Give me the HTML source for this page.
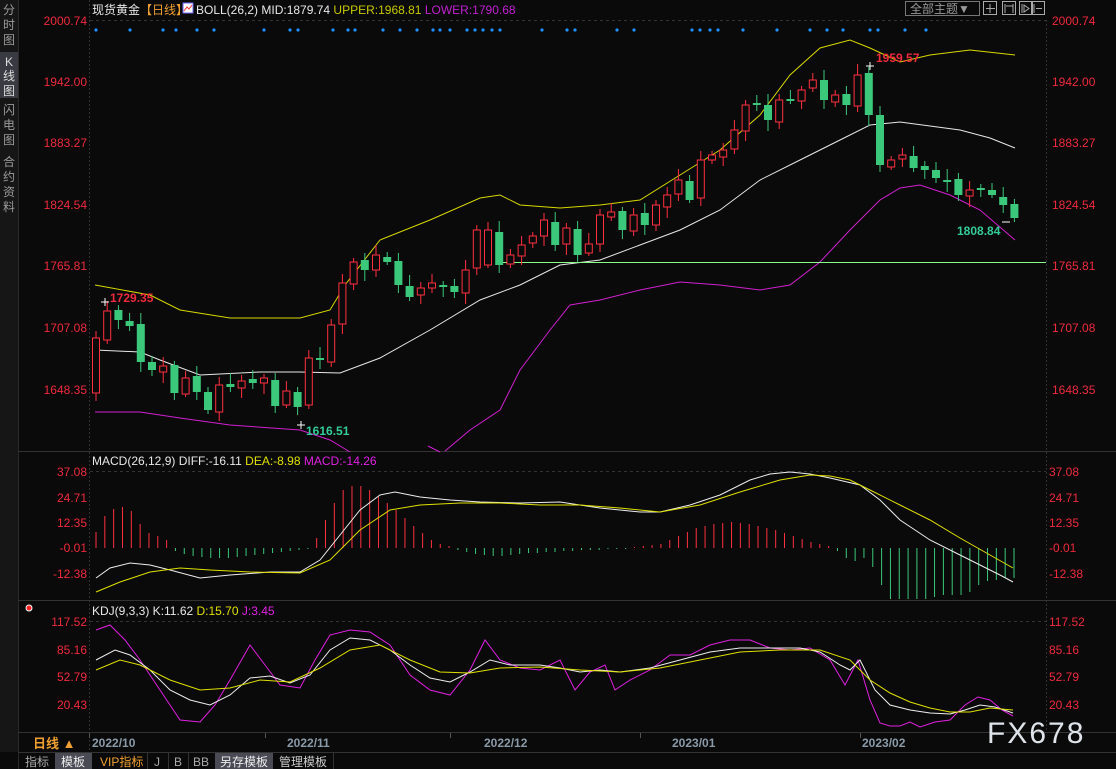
<!DOCTYPE html>
<html><head><meta charset="utf-8">
<style>
html,body{margin:0;padding:0;background:#0a0a0a;width:1116px;height:769px;overflow:hidden;font-family:"Liberation Sans","Noto Sans CJK SC",sans-serif;}
svg{display:block}
</style></head>
<body>
<svg id="s" width="1116" height="769" xmlns="http://www.w3.org/2000/svg" font-family="Liberation Sans, Noto Sans CJK SC, sans-serif">
<rect width="1116" height="769" fill="#0a0a0a"/>
<rect x="0" y="0" width="18" height="752" fill="#161616"/>
<line x1="18.5" y1="0" x2="18.5" y2="769" stroke="#2a2a2a"/>
<g font-size="12" fill="#9a9a9a" text-anchor="middle">
<text x="9" y="14">分</text><text x="9" y="29">时</text><text x="9" y="44">图</text>
<rect x="0" y="52" width="18" height="46" fill="#3a3a42"/>
<text x="9" y="66" fill="#ddd">K</text><text x="9" y="80" fill="#ddd">线</text><text x="9" y="95" fill="#ddd">图</text>
<text x="9" y="114">闪</text><text x="9" y="129">电</text><text x="9" y="144">图</text>
<text x="9" y="166">合</text><text x="9" y="181">约</text><text x="9" y="196">资</text><text x="9" y="211">料</text>
</g>
<line x1="89.5" y1="0" x2="89.5" y2="752" stroke="#333" stroke-dasharray="2,2"/>
<line x1="1046.5" y1="20" x2="1046.5" y2="732" stroke="#333" stroke-dasharray="2,2"/>
<line x1="18" y1="451.5" x2="1116" y2="451.5" stroke="#333"/>
<line x1="18" y1="600.5" x2="1116" y2="600.5" stroke="#333"/>
<line x1="18" y1="732.5" x2="1116" y2="732.5" stroke="#333"/>
<line x1="18" y1="752.5" x2="1116" y2="752.5" stroke="#333"/>
<line x1="90" y1="20.5" x2="1046" y2="20.5" stroke="#333" stroke-dasharray="3,3"/>
<line x1="90" y1="471.5" x2="1046" y2="471.5" stroke="#333" stroke-dasharray="3,3"/>
<line x1="90" y1="621.5" x2="1046" y2="621.5" stroke="#333" stroke-dasharray="3,3"/>
<text x="92" y="14" font-size="12" fill="#e8e8e8">现货黄金<tspan fill="#f0a030">【日线】</tspan></text>
<rect x="183" y="3" width="10" height="10" fill="#fff" stroke="#66f"/>
<polyline points="184,11 187,7 189,9 192,5" fill="none" stroke="#e33" stroke-width="1"/>
<text x="196" y="14" font-size="12" fill="#e8e8e8">BOLL(26,2) MID:1879.74 <tspan fill="#c8c800">UPPER:1968.81</tspan> <tspan fill="#c020d0">LOWER:1790.68</tspan></text>
<rect x="905.5" y="1.5" width="74" height="14" fill="none" stroke="#777"/>
<text x="910" y="13" font-size="12" fill="#999">全部主题▼</text>
<g fill="none" stroke="#aaa">
<rect x="983.5" y="1.5" width="13" height="13"/><rect x="1002.5" y="1.5" width="13" height="13"/><rect x="1019.5" y="1.5" width="13" height="13"/><rect x="1031.5" y="1.5" width="13" height="13"/>
<path d="M990 4v9M986 8.5h9M1005 4v9M1006 6h7M1013 4v9M1022 4v9M1024 5l5 3.5-5 3.5zM1034 4v9M1036 8.5h6"/>
</g>
<g font-size="12" fill="#ee2a3c">
<g text-anchor="end">
<text x="87" y="25">2000.74</text><text x="87" y="86">1942.00</text><text x="87" y="147">1883.27</text><text x="87" y="209">1824.54</text><text x="87" y="270">1765.81</text><text x="87" y="332">1707.08</text><text x="87" y="394">1648.35</text>
<text x="87" y="476">37.08</text><text x="87" y="502">24.71</text><text x="87" y="527">12.35</text><text x="87" y="552">-0.01</text><text x="87" y="578">-12.38</text>
<text x="87" y="626">117.52</text><text x="87" y="654">85.16</text><text x="87" y="681">52.79</text><text x="87" y="709">20.43</text>
</g>
<text x="1052" y="25">2000.74</text><text x="1052" y="86">1942.00</text><text x="1052" y="147">1883.27</text><text x="1052" y="209">1824.54</text><text x="1052" y="270">1765.81</text><text x="1052" y="332">1707.08</text><text x="1052" y="394">1648.35</text>
<text x="1049" y="476">37.08</text><text x="1049" y="502">24.71</text><text x="1049" y="527">12.35</text><text x="1049" y="552">-0.01</text><text x="1049" y="578">-12.38</text>
<text x="1049" y="626">117.52</text><text x="1049" y="654">85.16</text><text x="1049" y="681">52.79</text><text x="1049" y="709">20.43</text>
</g>
<text x="92" y="465" font-size="12" fill="#e8e8e8">MACD(26,12,9) DIFF:-16.11 <tspan fill="#e0e000">DEA:-8.98</tspan> <tspan fill="#e020e0">MACD:-14.26</tspan></text>
<text x="92" y="615" font-size="12" fill="#e8e8e8">KDJ(9,3,3) K:11.62 <tspan fill="#e0e000">D:15.70</tspan> <tspan fill="#e020e0">J:3.45</tspan></text>
<circle cx="29" cy="608" r="3" fill="#f22" stroke="#fff" stroke-width="1"/>
<g id="plot"></g>
<g font-size="12" font-weight="bold">
<text x="876" y="62" fill="#ee2a3c">1959.57</text>
<text x="957" y="235" fill="#3c9">1808.84</text>
<text x="110" y="302" fill="#ee2a3c">1729.35</text>
<text x="306" y="435" fill="#3c9">1616.51</text>
</g>
<g font-size="12" font-weight="bold" fill="#8a9aa8">
<text x="92" y="747">2022/10</text><text x="287" y="747">2022/11</text><text x="484" y="747">2022/12</text><text x="672" y="747">2023/01</text><text x="862" y="747">2023/02</text>
</g>
<g stroke="#555"><line x1="89.5" y1="733" x2="89.5" y2="738"/><line x1="265.5" y1="733" x2="265.5" y2="738"/><line x1="450.5" y1="733" x2="450.5" y2="738"/><line x1="640.5" y1="733" x2="640.5" y2="738"/><line x1="860.5" y1="733" x2="860.5" y2="738"/></g>
<text x="33" y="748" font-size="13" font-weight="bold" fill="#f0a030">日线 ▲</text>
<text x="987" y="743" font-size="30" fill="#dfe4ea" letter-spacing="2">FX678</text>
<g font-size="12">
<rect x="55" y="753" width="37" height="16" fill="#4a4a55"/>
<rect x="215" y="753" width="58" height="16" fill="#4a4a55"/>
<text x="25" y="766" fill="#aaa">指标</text>
<text x="61" y="766" fill="#eee">模板</text>
<text x="100" y="766" fill="#f0a030">VIP指标</text>
<text x="157" y="766" fill="#aaa" text-anchor="middle">J</text>
<text x="178" y="766" fill="#aaa" text-anchor="middle">B</text>
<text x="201" y="766" fill="#aaa" text-anchor="middle">BB</text>
<text x="220" y="766" fill="#eee">另存模板</text>
<text x="279" y="766" fill="#ccc">管理模板</text>
<g stroke="#333"><line x1="147.5" y1="753" x2="147.5" y2="769"/><line x1="168.5" y1="753" x2="168.5" y2="769"/><line x1="188.5" y1="753" x2="188.5" y2="769"/><line x1="333.5" y1="753" x2="333.5" y2="769"/></g>
</g>
</svg>
<script>
(function(){
var g=document.getElementById('plot'),h='';
function pl(p,c){h+='<polyline points="'+p.map(function(a){return a.join(',')}).join(' ')+'" fill="none" stroke="'+c+'" stroke-width="1"/>';}
[96,130,163,176,197,214,264,290,298,333,348,355,383,400,417,433,440,450,467,475,483,492,500,542,567,575,617,634,692,700,710,718,743,777,810,827,843,870,878,905,926].forEach(function(x){h+='<circle cx="'+x+'" cy="30" r="1.6" fill="#1e90ff"/>';});
pl([[95,285],[150,295],[180,310],[230,318],[300,318],[330,310],[345,285],[380,240],[430,220],[480,198],[500,195],[520,205],[560,208],[600,205],[640,200],[680,175],[720,150],[760,115],[790,75],[820,48],[850,40],[870,48],[900,62],[930,55],[970,50],[1015,55]],'#d8d800');
pl([[95,350],[140,352],[160,360],[200,375],[260,372],[300,372],[340,373],[380,358],[430,330],[480,300],[520,285],[560,265],[600,260],[640,245],[680,230],[720,210],[760,180],[800,160],[840,140],[870,125],[900,122],[930,126],[960,130],[990,138],[1015,148]],'#e8e8e8');
pl([[95,412],[140,412],[180,418],[230,425],[300,430],[330,440],[350,452]],'#d020d0');
pl([[428,446],[440,452]],'#d020d0');
pl([[445,451],[470,430],[500,410],[520,370],[550,330],[570,305],[600,300],[640,290],[680,282],[720,285],[760,290],[790,285],[820,262],[850,230],[880,200],[900,188],[920,185],[950,195],[980,210],[1015,240]],'#d020d0');
h+='<line x1="500" y1="262.5" x2="1046" y2="262.5" stroke="#8f8" stroke-width="1"/>';
var c=[393,338,311,320,326,362,370,366,393,378,392,410,385,387,381,383,378,406,391,407,358,360,325,283,262,270,255,262,285,297,288,283,287,292,270,230,230,265,255,245,236,220,245,228,255,244,215,212,230,215,225,205,195,180,200,160,155,150,130,105,105,120,100,100,90,80,100,95,105,75,115,165,160,155,168,170,178,180,195,190,190,195,205,218];
for(var i=1;i<c.length;i++){var x=96+(i-1)*11.2,o=c[i-1]+((i*7)%5-2),cl=c[i];if(i==36){o=265;}if(Math.abs(o-cl)<2)cl=o+(i%2?2:-2);
var up=cl<o,tp=Math.min(o,cl),bt=Math.max(o,cl),hi=tp-4-(i*3)%8,lo=bt+3+(i*5)%9,col=up?'#ff3040':'#3cc87a';
h+='<line x1="'+x+'" y1="'+hi+'" x2="'+x+'" y2="'+lo+'" stroke="'+col+'"/>';
if(up)h+='<rect x="'+(x-3.5)+'" y="'+tp+'" width="7" height="'+(bt-tp)+'" fill="#0a0a0a" stroke="'+col+'"/>';
else h+='<rect x="'+(x-4)+'" y="'+tp+'" width="8" height="'+(bt-tp)+'" fill="'+col+'"/>';}
h+='<path d="M101 302h8M105 298v8M866 66h8M870 62v8M1002 222h8M297 425h8M301 421v8" stroke="#fff"/>';
var m=[16,32,39,41,37,24,15,12,8,-3,-6,-8,-9,-10,-10,-10,-9,-8,-7,-6,-5,-4,-3,-2,-1,10,28,45,58,62,62,58,52,45,38,30,22,15,8,4,2,-2,-4,-6,-7,-8,-8,-7,-6,-5,-5,-4,-4,-3,-3,-2,-2,-2,-1,-1,-1,1,2,3,4,8,12,16,20,22,24,25,26,25,24,22,20,18,15,12,9,6,4,2,-3,-10,-13,-10,-19,-37,-51,-51,-51,-51,-51,-49,-47,-47,-47,-44,-37,-33,-32,-30,-30];
var sp=918/(m.length-1);
for(var j=0;j<m.length;j++){var xx=96+j*sp;h+='<line x1="'+xx+'" y1="548" x2="'+xx+'" y2="'+(548-m[j])+'" stroke="'+(m[j]>0?'#ff3040':'#3cc87a')+'"/>';}
pl([[96,578],[110,568],[130,563],[150,565],[170,570],[200,578],[230,575],[270,572],[300,572],[320,560],[340,535],[360,510],[380,495],[395,492],[420,497],[450,500],[480,502],[520,503],[560,502],[600,508],[640,512],[660,512],[690,505],[720,495],[750,480],[770,474],[790,472],[810,474],[830,478],[860,485],[880,500],[900,520],[930,540],[960,555],[980,565],[1000,575],[1013,582]],'#eee');
pl([[96,592],[120,582],[150,572],[180,568],[210,570],[250,572],[300,573],[330,560],[360,530],[390,510],[420,505],[460,503],[500,503],[540,505],[580,505],[620,508],[660,512],[700,505],[740,492],[780,480],[810,475],[830,476],[850,480],[870,490],[900,505],[930,520],[960,538],[990,555],[1013,568]],'#e0e000');
pl([[96,630],[110,625],[125,640],[140,660],[160,690],[180,720],[200,722],[215,705],[230,680],[250,645],[265,665],[280,685],[300,688],[315,660],[330,635],[350,630],[370,632],[390,645],[410,675],[430,690],[450,695],[470,670],[485,640],[500,660],[520,668],[540,670],[560,660],[575,690],[590,672],[605,665],[615,690],[630,680],[650,670],[670,655],[690,655],[710,645],[730,640],[750,640],[770,648],[790,650],[810,648],[830,660],[845,685],[858,660],[870,700],[880,723],[890,726],[900,726],[910,722],[920,727],[935,722],[950,720],[965,705],[978,697],[990,700],[1002,710],[1013,716]],'#e020e0');
pl([[96,660],[115,650],[130,655],[150,670],[170,690],[190,700],[210,705],[230,695],[250,678],[270,676],[290,683],[310,675],[330,650],[350,638],[370,640],[390,650],[410,665],[430,678],[450,682],[470,672],[490,660],[510,665],[540,665],[560,668],[580,672],[600,670],[620,672],[650,668],[680,660],[710,652],[740,648],[770,648],[800,648],[820,652],[840,665],[850,670],[860,660],[875,690],[890,705],[910,710],[930,713],[950,714],[965,710],[980,705],[995,707],[1013,713]],'#eee');
pl([[96,670],[120,660],[140,665],[170,680],[200,690],[230,688],[260,680],[290,682],[320,668],[350,650],[380,645],[410,660],[440,672],[470,673],[500,668],[540,667],[580,670],[620,672],[660,668],[700,660],[740,652],[780,650],[820,650],[850,660],[870,680],[890,693],[910,702],[930,708],[950,712],[970,712],[990,708],[1013,710]],'#e0e000');
g.innerHTML=h;
})();
</script>
</body></html>
